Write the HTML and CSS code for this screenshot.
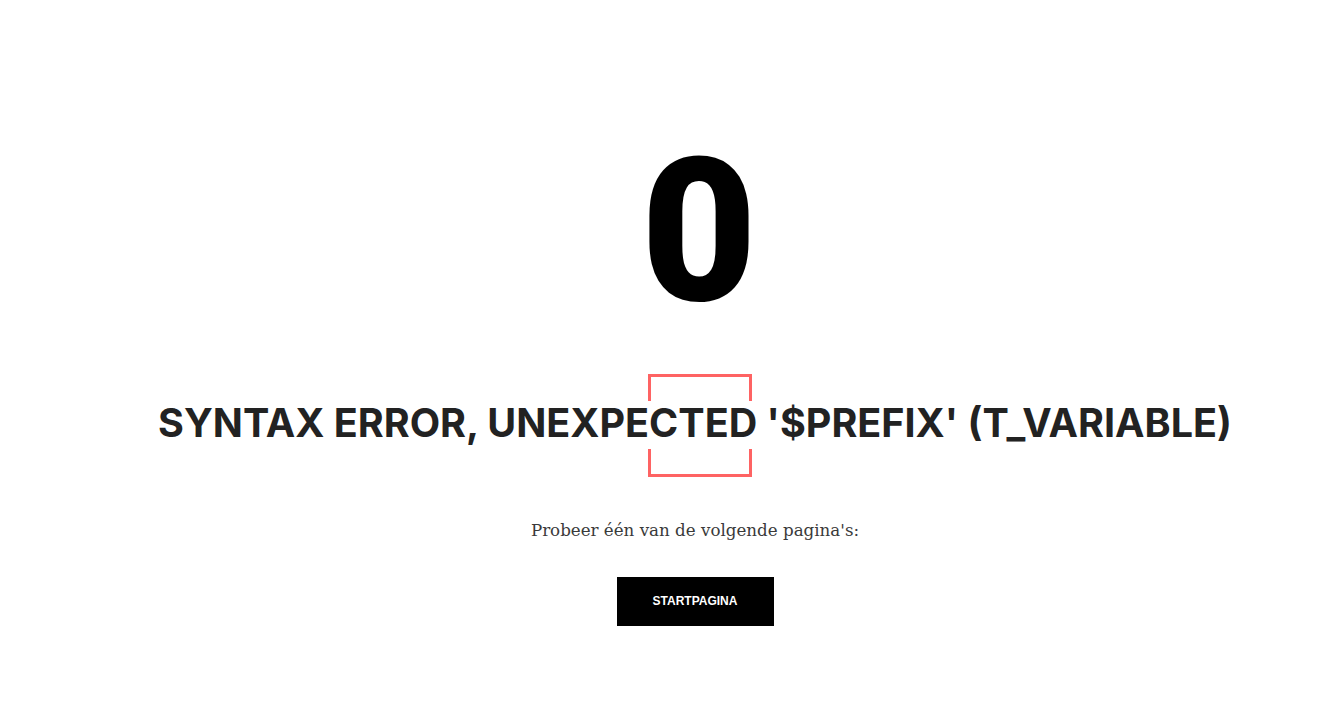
FILE: index.html
```html
<!DOCTYPE html>
<html lang="nl">
<head>
<meta charset="utf-8">
<title>Fout</title>
<link rel="stylesheet" href="styles.css">
</head>
<body>
<main class="page">
  <div class="code">0</div>
  <div class="title-wrap">
    <div class="bracket"></div>
    <h1 class="title">SYNTAX ERROR, UNEXPECTED '$PREFIX' (T_VARIABLE)</h1>
  </div>
  <p class="hint">Probeer één van de volgende pagina's:</p>
  <a class="button" href="#">STARTPAGINA</a>
</main>
</body>
</html>
```
FILE: styles.css
```css
html, body {
  margin: 0;
  padding: 0;
  background: #fff;
}

.page {
  display: flex;
  flex-direction: column;
  align-items: center;
  padding: 132px 0 0 65px;
}

.code {
  font-family: Roboto, "Liberation Sans", sans-serif;
  font-weight: 900;
  font-size: 200px;
  line-height: 1;
  color: #000;
  padding-left: 8px;
}

.title-wrap {
  position: relative;
  margin-top: 72px;
}

.bracket {
  position: absolute;
  left: 50%;
  margin-left: -47px;
  top: -30px;
  width: 104px;
  height: 97px;
  border-top: 3px solid #fe6363;
  border-bottom: 3px solid #fe6363;
}

.bracket::before,
.bracket::after {
  content: "";
  position: absolute;
  left: 0;
  right: 0;
  border-left: 3px solid #fe6363;
  border-right: 3px solid #fe6363;
}

.bracket::before {
  top: 0;
  height: 24px;
}

.bracket::after {
  bottom: 0;
  height: 25px;
}

.title {
  position: relative;
  margin: 0;
  font-family: Inter, "Liberation Sans", sans-serif;
  font-weight: 700;
  font-size: 39.5px;
  line-height: 1;
  color: #222;
  white-space: nowrap;
}

.hint {
  margin: 76px 0 0;
  font-family: "DejaVu Serif", serif;
  font-size: 16.7px;
  color: #3a3a3a;
}

.button {
  margin-top: 37px;
  display: flex;
  align-items: center;
  justify-content: center;
  width: 157px;
  height: 49px;
  background: #000;
  color: #fff;
  text-decoration: none;
  font-family: "Liberation Sans", Arial, sans-serif;
  font-weight: 700;
  font-size: 12px;
}
```
